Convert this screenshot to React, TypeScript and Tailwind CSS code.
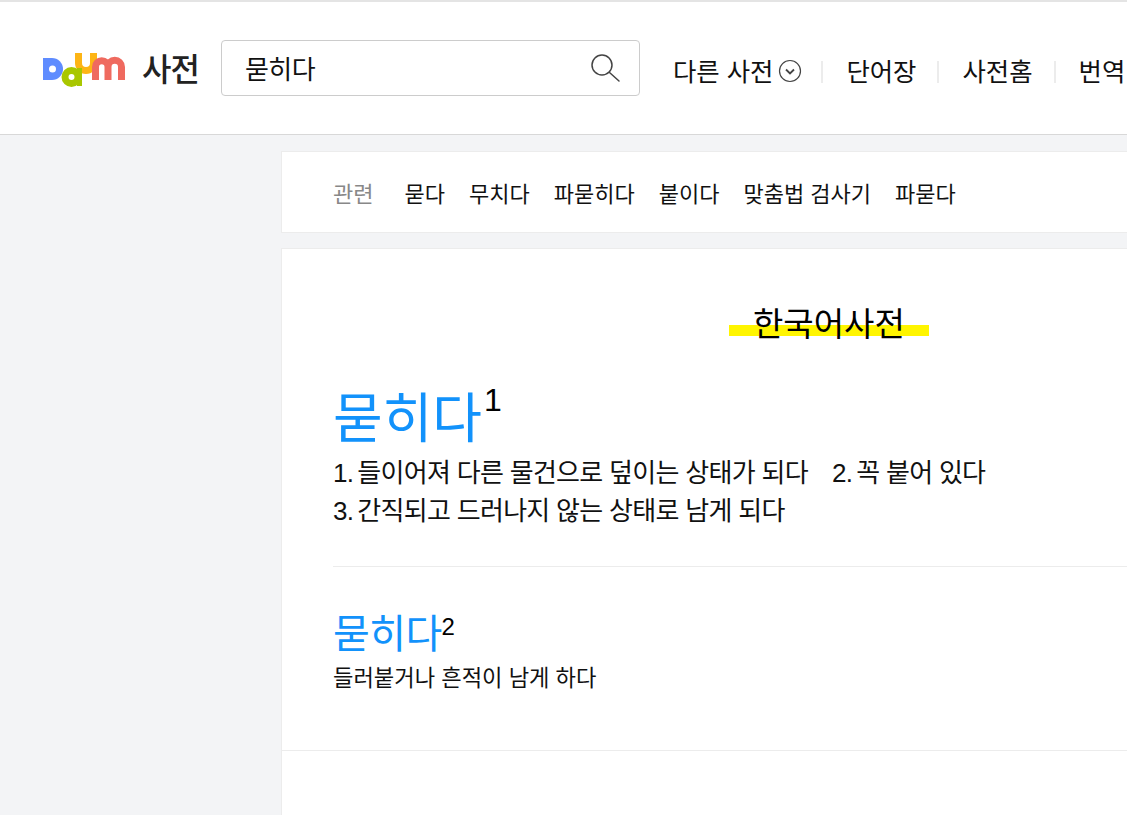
const font = { fontFamily: '"Liberation Sans", "Noto Sans CJK KR", sans-serif' };

const DaumLogo = () => (
    <svg width="84" height="36" viewBox="0 0 84 36" fill="none" className="mt-[4px] shrink-0">
        <path d="M0 6h9a11 11 0 0 1 0 22H0z" fill="#5f8cff" />
        <circle cx="9.500" cy="17" r="3.500" fill="#fff" />
        <path d="M35.500 1v10a7.500 7.500 0 0 0 15 0V1" stroke="#fdb515" strokeWidth="7" />
        <path d="M52.500 28V15a6.250 6.250 0 0 1 12.500 0v13M65 15a6.750 6.750 0 0 1 13.500 0v13" stroke="#ef6a5f" strokeWidth="7" />
        <circle cx="28.500" cy="25" r="6.500" stroke="#a9c700" strokeWidth="7" />
        <path d="M36.500 16v18" stroke="#a9c700" strokeWidth="5" />
    </svg>
);

const Divider = () => <span className="mb-[3px] ml-[21px] mr-[23px] h-[22px] w-[2px] bg-[#ececec]" />;

export default function App() {
    return (
        <div style={font} className="h-[815px] w-[1127px] overflow-hidden bg-[#f3f4f6] text-[#111]">
            <header className="flex h-[135px] items-center border-t-2 border-b border-t-[#e4e4e4] border-b-[#d8d8d8] bg-white pl-[43px]">
                <DaumLogo />
                <span className="ml-[15px] shrink-0 whitespace-nowrap pt-[4px] text-[32px] font-medium leading-none tracking-[-1px] text-[#222]">사전</span>
                <div className="ml-[22px] flex h-[56px] w-[419px] shrink-0 items-center justify-between rounded-[4px] border border-[#ccc] pl-[23px] pr-[18px]">
                    <span className="pt-[4px] text-[26px] leading-none tracking-[-0.500px] text-[#111]">묻히다</span>
                    <svg width="32" height="32" viewBox="0 0 32 32" fill="none" stroke="#444" strokeWidth="1.500">
                        <circle cx="13" cy="13" r="10" />
                        <path d="M20.500 20.500 30 29" strokeLinecap="round" />
                    </svg>
                </div>
                <nav className="ml-[33px] flex shrink-0 items-center whitespace-nowrap pt-[10px] text-[25.400px] leading-none">
                    <span>다른 사전</span>
                    <svg width="24" height="24" viewBox="0 0 24 24" fill="none" stroke="#444" className="mb-[5px] ml-[5px]">
                        <circle cx="12" cy="12" r="10.500" strokeWidth="1.200" />
                        <path d="M8 10.500 12 14.500l4-4" strokeWidth="1.800" />
                    </svg>
                    <span className="mb-[3px] ml-[19px] mr-[23px] h-[22px] w-[2px] bg-[#ececec]" />
                    <span>단어장</span>
                    <Divider />
                    <span>사전홈</span>
                    <Divider />
                    <span>번역</span>
                </nav>
            </header>
            <div className="ml-[281px] flex flex-col">
                <section className="mt-[16px] flex h-[82px] items-center border border-r-0 border-[#ececec] bg-white pl-[51px] pt-[5px] text-[22px] leading-none">
                    <span className="mr-[31px] text-[#888]">관련</span>
                    <div className="flex gap-[24px] whitespace-nowrap">
                        <span>묻다</span>
                        <span>무치다</span>
                        <span>파묻히다</span>
                        <span>붙이다</span>
                        <span>맞춤법 검사기</span>
                        <span>파묻다</span>
                    </div>
                </section>
                <section className="mt-[15px] h-[570px] border-t border-l border-[#ececec] bg-white">
                    <div className="border-b border-[#ececec] pb-[53px] pl-[51px]">
                        <div className="flex justify-start pt-[52px] pl-[396px]">
                            <h2 className="bg-[linear-gradient(transparent_24px,#fff500_24px,#fff500_35px,transparent_35px)] px-[24px] pt-[2px] text-[33px] leading-[44px] text-black">한국어사전</h2>
                        </div>
                        <div className="mt-[36px] flex items-start leading-none">
                            <span className="text-[54px] leading-[72px] text-[#1292fb]">묻히다</span>
                            <span className="-mt-[3px] ml-[2px] text-[32px] leading-[40px] text-black">1</span>
                        </div>
                        <p className="-mt-[1px] text-[26px] leading-[38px] tracking-[-0.700px] text-[#111]">
                            <span className="mr-[4px]">1.</span>들이어져 다른 물건으로 덮이는 상태가 되다<span className="ml-[24px] mr-[4px]">2.</span>꼭 붙어 있다
                            <br />
                            <span className="mr-[4px]">3.</span>간직되고 드러나지 않는 상태로 남게 되다
                        </p>
                        <div className="mt-[36px] mb-[41px] h-px bg-[#ececec]" />
                        <div className="flex items-start leading-none">
                            <span className="text-[40px] leading-[52px] tracking-[-0.600px] text-[#1292fb]">묻히다</span>
                            <span className="mt-[1px] text-[24px] leading-[36px] text-black">2</span>
                        </div>
                        <p className="mt-[1px] text-[22.200px] leading-[36px] text-[#111]">들러붙거나 흔적이 남게 하다</p>
                    </div>
                </section>
            </div>
        </div>
    );
}
